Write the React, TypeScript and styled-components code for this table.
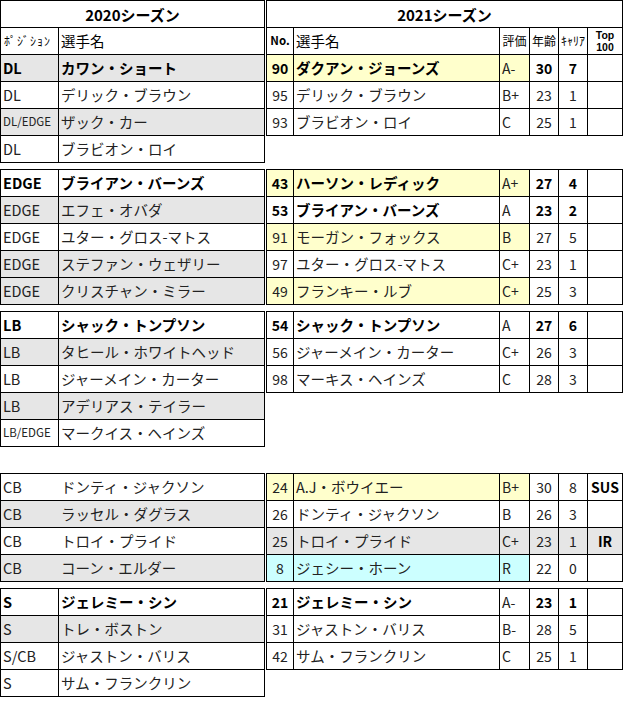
import styled, { createGlobalStyle } from "styled-components";

const GlobalStyle = createGlobalStyle`
  body {
    margin: 0;
    background: #fff;
    font-family: "Noto Sans CJK JP", "Noto Sans", sans-serif;
    color: #000;
  }
`;

type Fill = "yellow" | "cyan" | "gray";

interface LeftRow {
  pos: string;
  name: string;
  bold?: boolean;
  gray?: boolean;
  small?: boolean;
}

interface RightRow {
  no: string;
  name: string;
  grade: string;
  age: string;
  career: string;
  top?: string;
  bold?: boolean;
  fill?: Fill;
}

interface Section {
  gap: number;
  divider?: boolean;
  left: LeftRow[];
  right: RightRow[];
}

const fills: Record<Fill, string> = {
  yellow: "#ffffcc",
  cyan: "#ccffff",
  gray: "#e6e6e6",
};

const sections: Section[] = [
  {
    gap: 6,
    left: [
      { pos: "EDGE", name: "ブライアン・バーンズ", bold: true },
      { pos: "EDGE", name: "エフェ・オバダ", gray: true },
      { pos: "EDGE", name: "ユター・グロス-マトス" },
      { pos: "EDGE", name: "ステファン・ウェザリー", gray: true },
      { pos: "EDGE", name: "クリスチャン・ミラー", gray: true },
    ],
    right: [
      { no: "43", name: "ハーソン・レディック", grade: "A+", age: "27", career: "4", bold: true, fill: "yellow" },
      { no: "53", name: "ブライアン・バーンズ", grade: "A", age: "23", career: "2", bold: true },
      { no: "91", name: "モーガン・フォックス", grade: "B", age: "27", career: "5", fill: "yellow" },
      { no: "97", name: "ユター・グロス-マトス", grade: "C+", age: "23", career: "1" },
      { no: "49", name: "フランキー・ルブ", grade: "C+", age: "25", career: "3", fill: "yellow" },
    ],
  },
  {
    gap: 6,
    left: [
      { pos: "LB", name: "シャック・トンプソン", bold: true },
      { pos: "LB", name: "タヒール・ホワイトヘッド", gray: true },
      { pos: "LB", name: "ジャーメイン・カーター" },
      { pos: "LB", name: "アデリアス・テイラー", gray: true },
      { pos: "LB/EDGE", name: "マークイス・ヘインズ", small: true },
    ],
    right: [
      { no: "54", name: "シャック・トンプソン", grade: "A", age: "27", career: "6", bold: true },
      { no: "56", name: "ジャーメイン・カーター", grade: "C+", age: "26", career: "3" },
      { no: "98", name: "マーキス・ヘインズ", grade: "C", age: "28", career: "3" },
    ],
  },
  {
    gap: 26,
    divider: false,
    left: [
      { pos: "CB", name: "ドンティ・ジャクソン" },
      { pos: "CB", name: "ラッセル・ダグラス", gray: true },
      { pos: "CB", name: "トロイ・プライド" },
      { pos: "CB", name: "コーン・エルダー", gray: true },
    ],
    right: [
      { no: "24", name: "A.J・ボウイエー", grade: "B+", age: "30", career: "8", top: "SUS", fill: "yellow" },
      { no: "26", name: "ドンティ・ジャクソン", grade: "B", age: "26", career: "3" },
      { no: "25", name: "トロイ・プライド", grade: "C+", age: "23", career: "1", top: "IR", fill: "gray" },
      { no: "8", name: "ジェシー・ホーン", grade: "R", age: "22", career: "0", fill: "cyan" },
    ],
  },
  {
    gap: 6,
    left: [
      { pos: "S", name: "ジェレミー・シン", bold: true },
      { pos: "S", name: "トレ・ボストン", gray: true },
      { pos: "S/CB", name: "ジャストン・バリス" },
      { pos: "S", name: "サム・フランクリン" },
    ],
    right: [
      { no: "21", name: "ジェレミー・シン", grade: "A-", age: "23", career: "1", bold: true },
      { no: "31", name: "ジャストン・バリス", grade: "B-", age: "28", career: "5" },
      { no: "42", name: "サム・フランクリン", grade: "C", age: "25", career: "1" },
    ],
  },
];

const firstLeft: LeftRow[] = [
  { pos: "DL", name: "カワン・ショート", bold: true, gray: true },
  { pos: "DL", name: "デリック・ブラウン" },
  { pos: "DL/EDGE", name: "ザック・カー", gray: true, small: true },
  { pos: "DL", name: "ブラビオン・ロイ" },
];

const firstRight: RightRow[] = [
  { no: "90", name: "ダクアン・ジョーンズ", grade: "A-", age: "30", career: "7", bold: true, fill: "yellow" },
  { no: "95", name: "デリック・ブラウン", grade: "B+", age: "23", career: "1" },
  { no: "93", name: "ブラビオン・ロイ", grade: "C", age: "25", career: "1" },
];

const Sheet = styled.div`
  display: flex;
  flex-direction: column;
  width: 630px;
`;

const Group = styled.div<{ $gap: number }>`
  display: flex;
  align-items: flex-start;
  gap: 1px;
  margin-top: ${(p) => p.$gap}px;
`;

const Block = styled.div<{ $cols: string }>`
  display: grid;
  grid-template-columns: ${(p) => p.$cols};
  border-top: 1px solid #000;
  border-left: 1px solid #000;
`;

const Cell = styled.div<{
  $bg?: string;
  $center?: boolean;
  $bold?: boolean;
  $size?: number;
  $noRight?: boolean;
}>`
  box-sizing: border-box;
  height: 27px;
  padding: 0 2px;
  display: flex;
  align-items: center;
  justify-content: ${(p) => (p.$center ? "center" : "flex-start")};
  border-right: ${(p) => (p.$noRight ? "none" : "1px solid #000")};
  border-bottom: 1px solid #000;
  background: ${(p) => p.$bg ?? "#fff"};
  font-size: ${(p) => p.$size ?? 14.5}px;
  font-weight: ${(p) => (p.$bold ? 700 : 400)};
  color: ${(p) => (p.$bold ? "#000" : "#222")};
  white-space: nowrap;
  overflow: hidden;
  line-height: 1;
`;

const HeadCell = styled(Cell)`
  color: #000;
`;

const Title = styled(Cell)`
  grid-column: 1 / -1;
  justify-content: center;
  font-size: 15px;
  font-weight: 700;
  color: #000;
`;

const HalfKana = styled(HeadCell)`
  padding-left: 3px;
  letter-spacing: 1px;
`;

const TopHead = styled(Cell)`
  flex-direction: column;
  justify-content: center;
  font-family: "Liberation Sans", Arial, sans-serif;
  font-size: 10.5px;
  font-weight: 700;
  color: #000;
  line-height: 12px;

  span {
    display: block;
    height: 12px;
  }
`;

const LEFT_COLS = "58px 206px";
const RIGHT_COLS = "27px 206px 30px 29px 29px 35px";

function LeftRows({ rows, divider = true }: { rows: LeftRow[]; divider?: boolean }) {
  return (
    <>
      {rows.map((r, i) => {
        const bg = r.gray ? fills.gray : undefined;
        return (
          <div key={i} style={{ display: "contents" }}>
            <Cell $bg={bg} $bold={r.bold} $size={r.small ? 11.5 : 14.5} $noRight={!divider}>
              {r.pos}
            </Cell>
            <Cell $bg={bg} $bold={r.bold}>
              {r.name}
            </Cell>
          </div>
        );
      })}
    </>
  );
}

function RightRows({ rows }: { rows: RightRow[] }) {
  return (
    <>
      {rows.map((r, i) => {
        const main = r.fill ? fills[r.fill] : undefined;
        const rest = r.fill === "gray" ? fills.gray : undefined;
        return (
          <div key={i} style={{ display: "contents" }}>
            <Cell $bg={main} $bold={r.bold} $center $size={14}>
              {r.no}
            </Cell>
            <Cell $bg={main} $bold={r.bold}>
              {r.name}
            </Cell>
            <Cell $bg={main} $size={14}>
              {r.grade}
            </Cell>
            <Cell $bg={rest} $bold={r.bold} $center $size={14}>
              {r.age}
            </Cell>
            <Cell $bg={rest} $bold={r.bold} $center $size={14}>
              {r.career}
            </Cell>
            <Cell $bg={rest} $bold $center $size={14}>
              {r.top ?? ""}
            </Cell>
          </div>
        );
      })}
    </>
  );
}

export default function App() {
  return (
    <>
      <GlobalStyle />
      <Sheet>
        <Group $gap={0}>
          <Block $cols={LEFT_COLS}>
            <Title>2020シーズン</Title>
            <HalfKana $size={12}>ﾎﾟｼﾞｼｮﾝ</HalfKana>
            <HeadCell>選手名</HeadCell>
            <LeftRows rows={firstLeft} />
          </Block>
          <Block $cols={RIGHT_COLS}>
            <Title>2021シーズン</Title>
            <HeadCell $bold $center $size={11.5}>No.</HeadCell>
            <HeadCell>選手名</HeadCell>
            <HeadCell $size={12} $center>評価</HeadCell>
            <HeadCell $size={12} $center>年齢</HeadCell>
            <HeadCell $size={12} $center>ｷｬﾘｱ</HeadCell>
            <TopHead>
              <span>Top</span>
              <span>100</span>
            </TopHead>
            <RightRows rows={firstRight} />
          </Block>
        </Group>
        {sections.map((s, i) => (
          <Group key={i} $gap={s.gap}>
            <Block $cols={LEFT_COLS}>
              <LeftRows rows={s.left} divider={s.divider !== false} />
            </Block>
            <Block $cols={RIGHT_COLS}>
              <RightRows rows={s.right} />
            </Block>
          </Group>
        ))}
      </Sheet>
    </>
  );
}
